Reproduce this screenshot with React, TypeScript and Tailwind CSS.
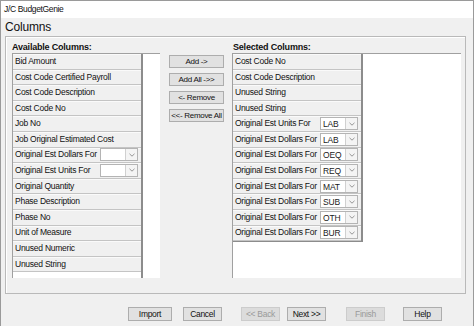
import React from 'react';

const FONT = { fontFamily: '"Liberation Sans", Arial, sans-serif' };

const AVAILABLE: { label: string; combo?: boolean }[] = [
  { label: 'Bid Amount' },
  { label: 'Cost Code Certified Payroll' },
  { label: 'Cost Code Description' },
  { label: 'Cost Code No' },
  { label: 'Job No' },
  { label: 'Job Original Estimated Cost' },
  { label: 'Original Est Dollars For', combo: true },
  { label: 'Original Est Units For', combo: true },
  { label: 'Original Quantity' },
  { label: 'Phase Description' },
  { label: 'Phase No' },
  { label: 'Unit of Measure' },
  { label: 'Unused Numeric' },
  { label: 'Unused String' },
];

const SELECTED: { label: string; value?: string }[] = [
  { label: 'Cost Code No' },
  { label: 'Cost Code Description' },
  { label: 'Unused String' },
  { label: 'Unused String' },
  { label: 'Original Est Units For', value: 'LAB' },
  { label: 'Original Est Dollars For', value: 'LAB' },
  { label: 'Original Est Dollars For', value: 'OEQ' },
  { label: 'Original Est Dollars For', value: 'REQ' },
  { label: 'Original Est Dollars For', value: 'MAT' },
  { label: 'Original Est Dollars For', value: 'SUB' },
  { label: 'Original Est Dollars For', value: 'OTH' },
  { label: 'Original Est Dollars For', value: 'BUR' },
];

function Combo({ value }: { value?: string }) {
  return (
    <div className="flex h-[13px] w-[38px] shrink-0 border border-[#b4b4b4] bg-white">
      <div className="flex-1 pl-[2px] text-[8.5px] leading-[12px] tracking-[-0.2px] text-[#1a1a1a]">{value ?? ''}</div>
      <div className="flex w-[12px] items-center justify-center border-l border-[#d0d0d0] bg-[#f4f4f4]">
        <svg width="6" height="4" viewBox="0 0 6 4">
          <path d="M0.5 0.8 L3 3.2 L5.5 0.8" fill="none" stroke="#8a8a8a" strokeWidth="0.9" />
        </svg>
      </div>
    </div>
  );
}

function Row({ label, combo, value }: { label: string; combo?: boolean; value?: string }) {
  return (
    <div className="flex h-[15.6px] items-center justify-between border-b border-[#c4c4c4] bg-[#f0f0f0] pl-[2px] pr-[3px] shadow-[inset_0_1px_0_#fafafa]">
      <span className="whitespace-nowrap text-[8.5px] tracking-[-0.25px] text-[#111]">{label}</span>
      {combo && <Combo value={value} />}
    </div>
  );
}

function SmallButton({ children }: { children: React.ReactNode }) {
  return (
    <div className="flex h-[13px] w-[55px] items-center justify-center border border-[#adadad] bg-[#e1e1e1] text-[8px] tracking-[-0.3px] text-[#111]">
      {children}
    </div>
  );
}

function WizButton({ children, disabled, w = 'w-[39px]' }: { children: React.ReactNode; disabled?: boolean; w?: string }) {
  return (
    <div
      className={`flex h-[14px] ${w} items-center justify-center border text-[8.5px] tracking-[-0.3px] ${
        disabled ? 'border-[#cccccc] bg-[#dcdcdc] text-[#9a9a9a]' : 'border-[#adadad] bg-[#e1e1e1] text-[#111]'
      }`}
    >
      {children}
    </div>
  );
}

export default function App() {
  return (
    <div className="h-[326px] w-[476px] bg-white" style={FONT}>
      <div className="flex h-[326px] w-[474px] flex-col border-l border-t border-r border-[#9a9a9a] bg-[#f0f0f0]">
        {/* title bar */}
        <div className="h-[17px] bg-white pl-[3px] text-[8.5px] leading-[17px] tracking-[-0.35px] text-[#111]">J/C BudgetGenie</div>

        {/* heading */}
        <div className="h-[18px] pl-[4px] text-[12px] leading-[18px] tracking-[-0.2px] text-[#111]">Columns</div>

        {/* group box */}
        <div className="ml-[4px] flex h-[258px] w-[461px] border border-[#b9b9b9] shadow-[inset_1px_1px_0_#ffffff] pl-[6px] pr-[4px] pt-[4px]">
          {/* available */}
          <div className="flex w-[148px] flex-col">
            <div className="h-[12px] text-[9px] font-bold leading-[12px] tracking-[-0.2px] text-[#111]">Available Columns:</div>
            <div className="flex h-[225px] border-l border-t border-[#a0a0a0] bg-white">
              <div className="flex h-[224px] w-[130px] flex-col border-r-2 border-[#8c8c8c]">
                {AVAILABLE.map((r, i) => (
                  <Row key={i} label={r.label} combo={r.combo} />
                ))}
              </div>
            </div>
          </div>

          {/* move buttons */}
          <div className="ml-[9px] flex w-[55px] flex-col gap-[5px] pt-[14px]">
            <SmallButton>Add -&gt;</SmallButton>
            <SmallButton>Add All -&gt;&gt;</SmallButton>
            <SmallButton>&lt;- Remove</SmallButton>
            <SmallButton>&lt;&lt;- Remove All</SmallButton>
          </div>

          {/* selected */}
          <div className="ml-[8px] flex w-[229px] flex-col">
            <div className="h-[12px] pl-[1px] text-[9px] font-bold leading-[12px] tracking-[-0.2px] text-[#111]">Selected Columns:</div>
            <div className="flex h-[225px] border-l border-t border-[#a0a0a0] bg-white">
              <div className="flex w-[130px] flex-col self-start border-r-2 border-b border-[#8c8c8c]">
                {SELECTED.map((r, i) => (
                  <Row key={i} label={r.label} combo={!!r.value} value={r.value} />
                ))}
              </div>
            </div>
          </div>
        </div>

        {/* wizard buttons */}
        <div className="mt-[13px] flex pl-[127px]">
          <WizButton w="w-[44px]">Import</WizButton>
          <div className="ml-[11px]">
            <WizButton>Cancel</WizButton>
          </div>
          <div className="ml-[19px]">
            <WizButton disabled>&lt;&lt; Back</WizButton>
          </div>
          <div className="ml-[7px]">
            <WizButton>Next &gt;&gt;</WizButton>
          </div>
          <div className="ml-[20px]">
            <WizButton disabled>Finish</WizButton>
          </div>
          <div className="ml-[18px]">
            <WizButton>Help</WizButton>
          </div>
        </div>
      </div>
    </div>
  );
}
